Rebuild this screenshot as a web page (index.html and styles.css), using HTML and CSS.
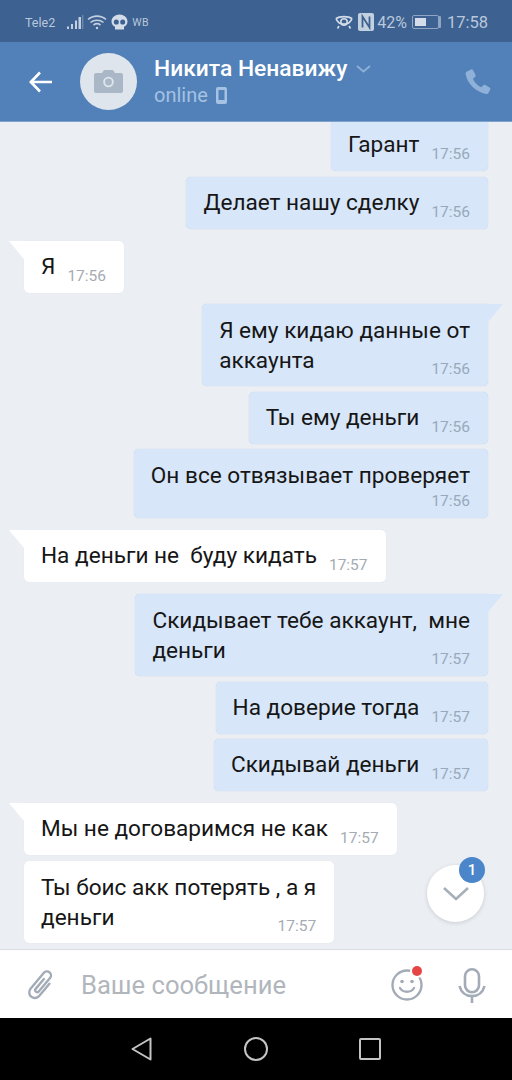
FILE: index.html
```html
<!DOCTYPE html>
<html lang="ru">
<head>
    <meta charset="UTF-8">
    <meta name="viewport" content="width=device-width, initial-scale=1.0">
    <title>Никита Ненавижу</title>
    <link rel="stylesheet" href="styles.css">
</head>
<body>
    <div class="phone">
        <div class="status-bar">
            <div class="status-left">
                <span class="carrier">Tele2</span>
                <svg class="signal" width="18" height="16" viewBox="0 0 18 16"><path d="M1 12.500h2v2.500H1zM5 10h2v5H5zM9 6.500h2V15H9zM12.500 3h2.500v12h-2.500z" fill="#c3d0e0"/><path d="M16.800 1v14" stroke="#7f98b8" stroke-width="1"/></svg>
                <svg class="wifi" width="20" height="16" viewBox="0 0 20 16" fill="none" stroke="#c3d0e0" stroke-width="1.600"><path d="M1 5.500c5-4.500 13-4.500 18 0M3.500 8.500c3.500-3 9.500-3 13 0M6.500 11c2-1.500 5-1.500 7 0"/><circle cx="10" cy="14" r="1.200" fill="#c3d0e0" stroke="none"/></svg>
                <svg class="panda" width="17" height="16" viewBox="0 0 17 16"><path d="M8.500.5c4.300 0 8 2.900 8 7 0 2.600-1.500 4.300-3.500 5.300V15.500H4v-2.700C2 11.800.5 10.100.5 7.500c0-4.100 3.700-7 8-7z" fill="#d3dce8"/><ellipse cx="5.300" cy="8" rx="2.500" ry="2.600" fill="#3d6190"/><ellipse cx="11.700" cy="8" rx="2.500" ry="2.600" fill="#3d6190"/></svg>
                <span class="wb">WB</span>
            </div>
            <div class="status-right">
                <svg class="eye" width="18" height="16" viewBox="0 0 18 16" fill="none" stroke="#d3dce8" stroke-width="1.600"><path d="M1 4.500c2.500 7.500 13.500 7.500 16 0"/><path d="M1 4.500c3.500-2.500 12.500-2.500 16 0"/><circle cx="9" cy="8" r="3.200"/><path d="M4 12l-1.500 2.500M14 12l1.500 2.500"/></svg>
                <svg class="nfc" width="16" height="18" viewBox="0 0 16 18"><rect width="16" height="18" rx="2" fill="#c3d0e0"/><path d="M4.500 14.500V3.500l7 11V3.500" fill="none" stroke="#3d6190" stroke-width="1.800"/></svg>
                <span class="percent">42%</span>
                <div class="battery"><div class="battery-fill"></div></div>
                <span class="clock">17:58</span>
            </div>
        </div>

        <div class="header">
            <svg class="back" width="24" height="22" viewBox="0 0 24 22" fill="none" stroke="#fff" stroke-width="2.600"><path d="M23 11H2M11 1.500L1.800 11l9.200 9.500"/></svg>
            <div class="avatar">
                <svg width="29" height="23" viewBox="0 0 29 23"><path d="M2 3h6l2-3h9l2 3h6a2 2 0 0 1 2 2v16a2 2 0 0 1-2 2H2a2 2 0 0 1-2-2V5a2 2 0 0 1 2-2z" fill="#a9b7c6"/><circle cx="14.500" cy="12" r="5.300" fill="#dfe5ec"/><circle cx="14.500" cy="12" r="3.400" fill="#a9b7c6"/></svg>
            </div>
            <div class="peer">
                <div class="peer-name">
                    <span>Никита Ненавижу</span>
                    <svg width="15" height="8" viewBox="0 0 15 8" fill="none" stroke="#8fb0d8" stroke-width="1.800"><path d="M1 1l6.500 5.500L14 1"/></svg>
                </div>
                <div class="peer-status">
                    <span>online</span>
                    <svg width="11" height="17" viewBox="0 0 11 17"><rect width="11" height="17" rx="2" fill="#a5c2e3"/><rect x="2.500" y="3" width="6" height="10" fill="#5181b8"/></svg>
                </div>
            </div>
            <svg class="call" width="26" height="26" viewBox="0 0 26 26"><path d="M2 2.500L6 .5c1-.4 1.700 0 2.200.9l2.300 4.400c.4.900.2 1.600-.5 2.200L8 9.800c1 3 4.300 6.800 8.300 8.500l1.900-2c.7-.7 1.500-.8 2.300-.3l4 2.500c.9.600 1.100 1.300.7 2.200l-1.600 3c-.5.900-1.400 1.500-2.500 1.300C10.500 23 2 14 .6 5c-.1-1.100.4-2 1.400-2.500z" fill="#8fb0d8"/></svg>
        </div>

        <div class="chat">
            <div class="bubble out cut"><span>Гарант</span><time>17:56</time></div>
            <div class="bubble out"><span>Делает нашу сделку</span><time>17:56</time></div>
            <div class="bubble in tail new-group"><span>Я</span><time>17:56</time></div>
            <div class="bubble out tail stack new-group tight"><span>Я ему кидаю данные от<br>аккаунта</span><time class="tuck">17:56</time></div>
            <div class="bubble out"><span>Ты ему деньги</span><time>17:56</time></div>
            <div class="bubble out stack tight"><span>Он все отвязывает проверяет</span><time>17:56</time></div>
            <div class="bubble in tail new-group"><span>На деньги не&nbsp; буду кидать</span><time>17:57</time></div>
            <div class="bubble out tail stack new-group"><span>Скидывает тебе аккаунт,&nbsp; мне<br>деньги</span><time class="tuck">17:57</time></div>
            <div class="bubble out"><span>На доверие тогда</span><time>17:57</time></div>
            <div class="bubble out tight"><span>Скидывай деньги</span><time>17:57</time></div>
            <div class="bubble in tail new-group"><span>Мы не договаримся не как</span><time>17:57</time></div>
            <div class="bubble in stack"><span>Ты боис акк потерять , а я<br>деньги</span><time class="tuck">17:57</time></div>

            <div class="scroll-down">
                <svg width="28" height="16" viewBox="0 0 28 16" fill="none" stroke="#a6afba" stroke-width="2.600"><path d="M2 2l12 11L26 2"/></svg>
                <div class="badge">1</div>
            </div>
        </div>

        <div class="composer">
            <svg class="clip" width="30" height="34" viewBox="0 0 30 34" fill="none" stroke="#a3acb6" stroke-width="3" stroke-linecap="round"><g transform="translate(15 17) rotate(40) scale(.8) translate(0 -2)"><path d="M7 -6V14A7 7 0 0 1 -7 14V-12A5 5 0 0 1 3 -12V10A2.500 2.500 0 0 1 -2 10V-6"/></g></svg>
            <div class="placeholder">Ваше сообщение</div>
            <div class="smile">
                <svg width="32" height="32" viewBox="0 0 32 32" fill="none" stroke="#a3acb6" stroke-width="2.400"><circle cx="16" cy="16" r="14.500"/><path d="M9 19c3 5 11 5 14 0" stroke-linecap="round"/><circle cx="11" cy="12.500" r="1.800" fill="#a3acb6" stroke="none"/><circle cx="21" cy="12.500" r="1.800" fill="#a3acb6" stroke="none"/></svg>
                <div class="red-dot"></div>
            </div>
            <svg class="mic" width="28" height="35" viewBox="0 0 28 35" fill="none" stroke="#a3acb6" stroke-width="2.600"><rect x="7" y="1.300" width="14" height="23" rx="7"/><path d="M1.500 18c1.500 6 6 10 12.500 10s11-4 12.500-10M14 28v7"/></svg>
        </div>

        <div class="nav-bar">
            <svg width="21" height="24" viewBox="0 0 21 24" fill="none" stroke="#c4c4c4" stroke-width="2" stroke-linejoin="round"><path d="M19.500 1.500v21L1.500 12z"/></svg>
            <svg width="24" height="24" viewBox="0 0 24 24" fill="none" stroke="#c4c4c4" stroke-width="2"><circle cx="12" cy="12" r="11"/></svg>
            <svg width="22" height="22" viewBox="0 0 22 22" fill="none" stroke="#c4c4c4" stroke-width="2"><rect x="1" y="1" width="20" height="20" rx="1"/></svg>
        </div>
    </div>
</body>
</html>
```

FILE: styles.css
```css
* {
    box-sizing: border-box;
}

body {
    margin: 0;
    font-family: Roboto, "Liberation Sans", sans-serif;
    background-color: #ebeff4;
}

.phone {
    width: 512px;
    height: 1080px;
    display: flex;
    flex-direction: column;
    overflow: hidden;
}

/* status bar */
.status-bar {
    height: 42px;
    flex: none;
    display: flex;
    justify-content: space-between;
    align-items: center;
    padding: 2px 24px 0 25px;
    background-color: #3d6190;
    color: #b9c8dc;
}

.status-left,
.status-right {
    display: flex;
    align-items: center;
}

.carrier {
    font-size: 12.5px;
    margin-right: 11px;
}

.signal {
    margin-right: 3px;
}

.wifi {
    margin-right: 4px;
}

.panda {
    margin-right: 4px;
}

.wb {
    font-size: 10.5px;
    letter-spacing: 0.5px;
}

.eye {
    margin-right: 5px;
}

.nfc {
    margin-right: 3px;
}

.percent {
    font-size: 16px;
    margin-right: 5px;
}

.battery {
    width: 27px;
    height: 14px;
    margin-right: 8px;
    padding: 2px;
    border: 1px solid #8ea5c4;
    border-radius: 2px;
    box-shadow: 3px 0 0 -1px #8ea5c4;
}

.battery-fill {
    width: 11px;
    height: 100%;
    background-color: #d3dce8;
}

.clock {
    font-size: 16.5px;
}

/* header */
.header {
    height: 80px;
    flex: none;
    display: flex;
    align-items: center;
    padding: 0 21px 0 29px;
    background-color: #5181b8;
    border-bottom: 1px solid #7fa2cb;
    position: relative;
    z-index: 2;
}

.back {
    flex: none;
    margin-right: 27px;
}

.avatar {
    width: 57px;
    height: 57px;
    flex: none;
    margin-right: 17px;
    border-radius: 50%;
    background-color: #dfe5ec;
    display: flex;
    align-items: center;
    justify-content: center;
}

.peer {
    flex: 1;
    padding-top: 1px;
}

.peer-name {
    display: flex;
    align-items: center;
    gap: 9px;
    font-size: 22.8px;
    font-weight: 500;
    line-height: 26px;
    color: #fff;
}

.peer-status {
    display: flex;
    align-items: center;
    gap: 8px;
    font-size: 20px;
    line-height: 26px;
    color: #a5c2e3;
}

/* messages */
.chat {
    flex: 1;
    min-height: 0;
    display: flex;
    flex-direction: column;
    gap: 6px;
    padding: 0 24px;
    position: relative;
    border-bottom: 1px solid #d9dde2;
}

.bubble {
    display: flex;
    align-items: flex-end;
    gap: 12px;
    min-height: 52px;
    padding: 11px 18px 11px 17px;
    border-radius: 5px;
    font-size: 22.6px;
    line-height: 30px;
    color: #161616;
    position: relative;
}

.bubble time {
    font-size: 15.5px;
    line-height: 17px;
    margin-bottom: -3px;
    color: #a4abb3;
}

.in {
    align-self: flex-start;
    background-color: #fff;
    box-shadow: 0 0 1px #d5dae0;
}

.out {
    align-self: flex-end;
    background-color: #d7e6f8;
    box-shadow: 0 0 1px #aac4e2;
}

.out time {
    color: #98a9bb;
}

.cut {
    height: 49px;
    min-height: 0;
    padding-top: 9px;
    border-radius: 0 0 5px 5px;
}

.new-group {
    margin-top: 6px;
}

/* the reference spacing is not quite even */
.tight {
    margin-top: -1px;
}

.new-group.tight {
    margin-top: 5px;
}

.stack {
    flex-direction: column;
    gap: 2px;
    padding-top: 12px;
    padding-bottom: 8px;
}

.stack time {
    align-self: flex-end;
    margin-bottom: 0;
}

.stack time.tuck {
    margin-top: -17px;
}

/* little corner that points at the sender */
.tail.in {
    border-top-left-radius: 0;
}

.tail.out {
    border-top-right-radius: 0;
}

.tail::after {
    content: "";
    position: absolute;
    top: 0;
    width: 15px;
    height: 18px;
}

.tail.in::after {
    right: 100%;
    background-color: #fff;
    clip-path: polygon(0 0, 100% 0, 100% 100%);
}

.tail.out::after {
    left: 100%;
    background-color: #d7e6f8;
    clip-path: polygon(0 0, 100% 0, 0 100%);
}

/* scroll to bottom button */
.scroll-down {
    position: absolute;
    right: 28px;
    bottom: 27px;
    width: 57px;
    height: 57px;
    border-radius: 50%;
    background-color: #fff;
    box-shadow: 0 1px 4px rgba(0, 0, 0, 0.15);
    display: flex;
    align-items: center;
    justify-content: center;
}

.badge {
    position: absolute;
    top: -8px;
    right: -1px;
    width: 26px;
    height: 26px;
    border-radius: 50%;
    background-color: #4a86c9;
    color: #fff;
    font-size: 15px;
    font-weight: 500;
    line-height: 26px;
    text-align: center;
}

/* message input */
.composer {
    height: 68px;
    flex: none;
    display: flex;
    align-items: center;
    padding: 2px 26px 0 26px;
    background-color: #fff;
}

.clip {
    flex: none;
    margin-right: 25px;
}

.placeholder {
    flex: 1;
    font-size: 25.6px;
    color: #b1b6bd;
}

.smile {
    position: relative;
    width: 32px;
    height: 32px;
    margin-right: 35px;
}

.red-dot {
    position: absolute;
    top: -3px;
    right: 1px;
    width: 10px;
    height: 10px;
    border-radius: 50%;
    background-color: #e64646;
    box-shadow: 0 0 0 2px #fff;
}

/* android buttons */
.nav-bar {
    height: 62px;
    flex: none;
    display: flex;
    align-items: center;
    justify-content: space-between;
    padding: 0 131px 0 131px;
    background-color: #000;
}
```
